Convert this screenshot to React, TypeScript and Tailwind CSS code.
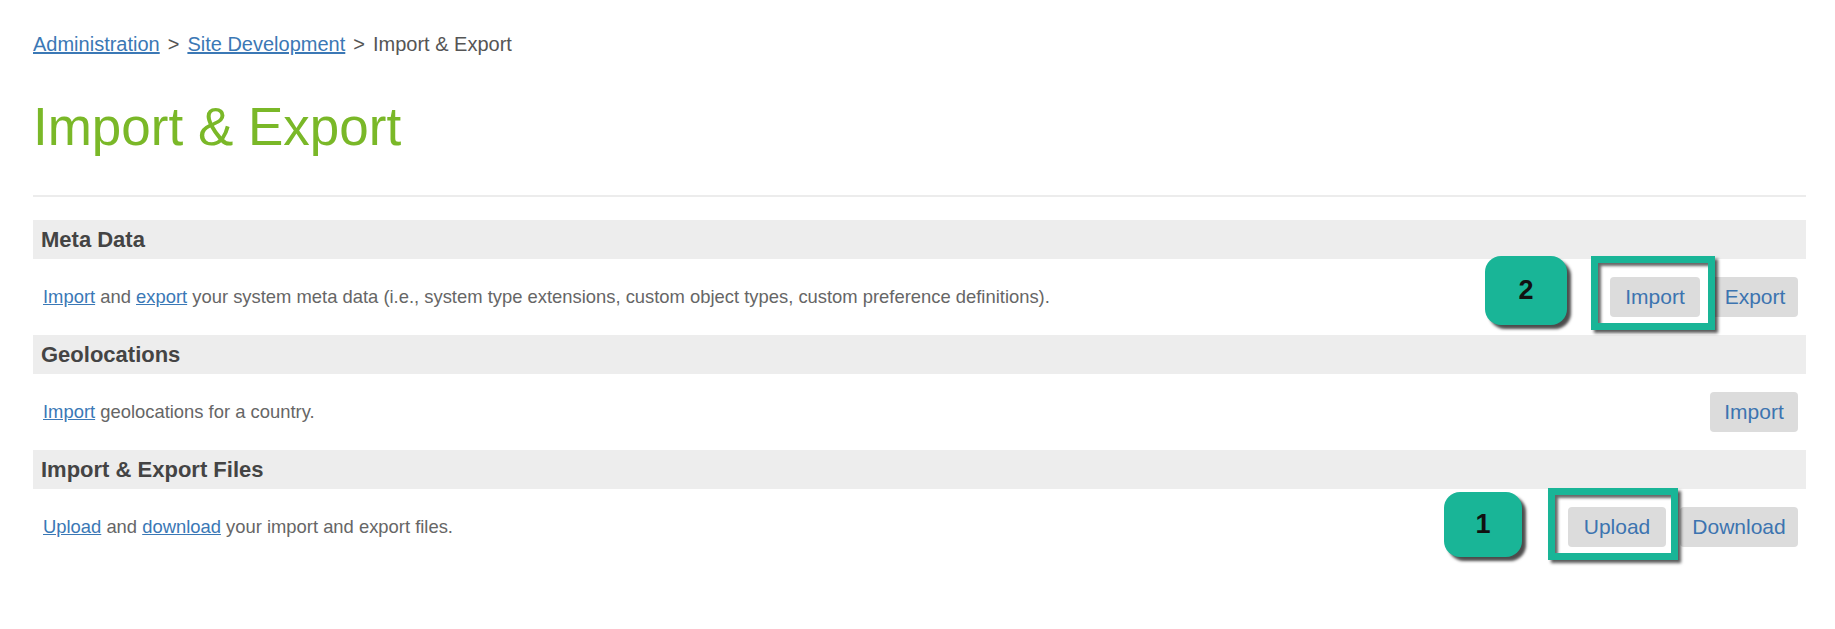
import React from 'react';

const font = { fontFamily: '"Liberation Sans", Arial, sans-serif' };

function Btn({ label, w }: { label: string; w: string }) {
  return (
    <span
      className={`flex h-[40px] ${w} items-center justify-center rounded-[4px] bg-[#dcdcdc] text-[21px] text-[#3c74b0]`}
    >
      {label}
    </span>
  );
}

function Marked({
  label,
  w,
  num,
  badge,
  frame,
}: {
  label: string;
  w: string;
  num: string;
  badge: string;
  frame: string;
}) {
  return (
    <span className="relative">
      <Btn label={label} w={w} />
      {/* annotation frame */}
      <span
        className={`pointer-events-none absolute ${frame} border-[7px] border-[#19b597] shadow-[3px_3px_3px_rgba(0,0,0,0.65),inset_3px_3px_3px_rgba(0,0,0,0.6)]`}
      />
      {/* annotation badge */}
      <span
        className={`absolute ${badge} flex items-center justify-center rounded-[16px] bg-[#19b597] text-[27px] font-bold text-[#111] shadow-[4px_4px_3px_rgba(0,0,0,0.7)]`}
      >
        {num}
      </span>
    </span>
  );
}

function Header({ title }: { title: string }) {
  return (
    <div className="flex h-[39px] items-center bg-[#ededed] pl-[8px] text-[22px] font-bold text-[#444]">
      {title}
    </div>
  );
}

function Row({ children, right }: { children: React.ReactNode; right: React.ReactNode }) {
  return (
    <div className="flex h-[76px] items-center justify-between pl-[10px] pr-[8px]">
      <p className="text-[18.4px] text-[#666]">{children}</p>
      <div className="flex items-center">{right}</div>
    </div>
  );
}

const A = ({ children }: { children: React.ReactNode }) => (
  <a className="text-[#3a78b6] underline">{children}</a>
);

export default function App() {
  return (
    <div className="min-h-screen bg-white" style={font}>
      <div className="w-[1773px] pl-[33px] box-content">
        {/* Breadcrumb */}
        <div className="pt-[34px] text-[20px] leading-[20px] text-[#555]">
          <a className="text-[#3b78b5] underline">Administration</a>
          <span className="mx-[8px]">&gt;</span>
          <a className="text-[#3b78b5] underline">Site Development</a>
          <span className="mx-[8px]">&gt;</span>
          <span>Import &amp; Export</span>
        </div>

        <h1 className="mt-[46px] text-[53px] leading-[53px] text-[#7ab828]">Import &amp; Export</h1>

        <div className="mt-[42px] border-t-2 border-[#ececec]" />

        <div className="mt-[23px]">
          <Header title="Meta Data" />
          <Row
            right={
              <>
                <Marked
                  label="Import"
                  w="w-[90px]"
                  num="2"
                  frame="-left-[19px] -top-[21px] -right-[15px] -bottom-[13px]"
                  badge="-left-[125px] -top-[21px] w-[82px] h-[69px]"
                />
                <span className="ml-[12px]">
                  <Btn label="Export" w="w-[86px]" />
                </span>
              </>
            }
          >
            <A>Import</A> and <A>export</A> your system meta data (i.e., system type extensions, custom object
            types, custom preference definitions).
          </Row>

          <Header title="Geolocations" />
          <Row right={<Btn label="Import" w="w-[88px]" />}>
            <A>Import</A> geolocations for a country.
          </Row>

          <Header title="Import & Export Files" />
          <Row
            right={
              <>
                <Marked
                  label="Upload"
                  w="w-[98px]"
                  num="1"
                  frame="-left-[20px] -top-[19px] -right-[12px] -bottom-[13px]"
                  badge="-left-[124px] -top-[15px] w-[78px] h-[65px]"
                />
                <span className="ml-[14px]">
                  <Btn label="Download" w="w-[118px]" />
                </span>
              </>
            }
          >
            <A>Upload</A> and <A>download</A> your import and export files.
          </Row>
        </div>
      </div>
    </div>
  );
}
